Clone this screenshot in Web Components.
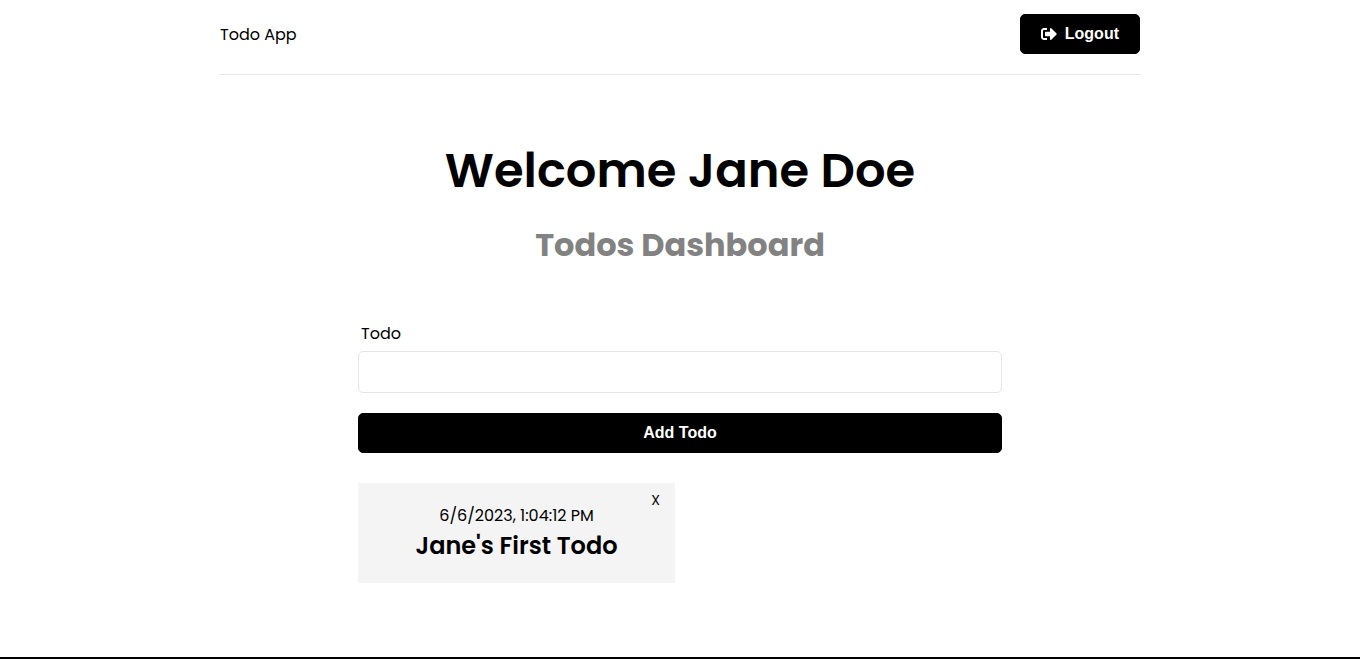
<!DOCTYPE html>
<html lang="en">
<head>
<meta charset="utf-8">
<meta name="viewport" content="width=device-width, initial-scale=1">
<title>Todo App</title>
<style>
  body { margin: 0; background: #fff; color: #000; font: 16px/25px Poppins, Inter, sans-serif; }
</style>
</head>
<body>
<todo-app>
  <app-header slot="header">Todo App</app-header>
  <page-heading>Welcome Jane Doe<span slot="subtitle">Todos Dashboard</span></page-heading>
  <todo-form></todo-form>
  <todo-list>
    <todo-item date="6/6/2023, 1:04:12 PM">Jane's First Todo</todo-item>
  </todo-list>
</todo-app>

<script>
  const base = `<style>
    *, *::before { box-sizing: border-box; }
    h1, h2, p { margin: 0; }
    button { font: 700 16px/18px Arial, "Liberation Sans", sans-serif; cursor: pointer; }
    .btn {
      display: flex; align-items: center; justify-content: center; gap: 8px;
      height: 40px; padding: 0 20px; border: 1px solid #000; border-radius: 5px;
      background: #000; color: #fff;
    }
  </style>`;

  function define(name, markup, ready) {
    const template = document.createElement('template');
    template.innerHTML = base + markup;
    customElements.define(name, class extends HTMLElement {
      constructor() {
        super();
        this.attachShadow({ mode: 'open' }).append(template.content.cloneNode(true));
      }
      connectedCallback() { if (ready) ready(this, this.shadowRoot); }
    });
  }

  define('todo-app', `
    <style>
      :host { display: block; box-sizing: border-box; min-height: 100vh; border-bottom: 2px solid #000; }
      .container { max-width: 960px; margin: 0 auto; padding: 0 20px 60px; box-sizing: border-box; }
    </style>
    <div class="container">
      <slot name="header"></slot>
      <main><slot></slot></main>
    </div>`);

  define('app-header', `
    <style>
      :host { display: block; }
      header {
        display: flex; align-items: center; justify-content: space-between;
        padding: 14px 0 20px; margin-bottom: 60px; border-bottom: 1px solid #e6e6e6;
      }
      a { color: inherit; text-decoration: none; }
      svg { display: block; }
    </style>
    <header>
      <a href="#"><slot></slot></a>
      <button class="btn" type="button">
        <svg width="16" height="16" viewBox="0 0 512 512" fill="currentColor" aria-hidden="true">
          <path d="M497 273L329 441c-15 15-41 4.500-41-17v-96H152c-13.300 0-24-10.700-24-24v-96c0-13.300 10.700-24 24-24h136V88c0-21.400 25.900-32 41-17l168 168c9.300 9.400 9.300 24.600 0 34zM192 436v-40c0-6.600-5.400-12-12-12H96c-17.700 0-32-14.300-32-32V160c0-17.700 14.300-32 32-32h84c6.600 0 12-5.400 12-12V76c0-6.600-5.400-12-12-12H96c-53 0-96 43-96 96v192c0 53 43 96 96 96h84c6.600 0 12-5.400 12-12z"/>
        </svg>
        Logout
      </button>
    </header>`);

  define('page-heading', `
    <style>
      :host { display: block; margin-bottom: 50px; text-align: center; }
      h1 { font-size: 48px; line-height: 72px; font-weight: 600; }
      h2 { margin-top: 12px; font-size: 32px; line-height: 52px; font-weight: 700; color: #828282; }
    </style>
    <h1><slot></slot></h1>
    <h2><slot name="subtitle"></slot></h2>`);

  define('todo-form', `
    <style>
      :host { display: block; width: 70%; margin: 0 auto 30px; }
      label { display: block; padding: 0 3px; margin-bottom: 5px; }
      input {
        display: block; width: 100%; height: 42px; padding: 10px; margin-bottom: 20px;
        border: 1px solid #e6e6e6; border-radius: 5px; font: inherit;
      }
      .btn { width: 100%; }
    </style>
    <form>
      <label for="text">Todo</label>
      <input type="text" id="text" name="text">
      <button class="btn" type="submit">Add Todo</button>
    </form>`, (host, root) => {
      root.querySelector('form').addEventListener('submit', e => e.preventDefault());
    });

  define('todo-list', `
    <style>
      :host { display: grid; grid-template-columns: repeat(2, 1fr); gap: 10px; width: 70%; margin: 0 auto; }
    </style>
    <slot></slot>`);

  define('todo-item', `
    <style>
      :host { display: block; position: relative; box-sizing: border-box; padding: 20px 0 19px; background: #f4f4f4; text-align: center; }
      h2 { font-size: 24px; line-height: 36px; font-weight: 600; }
      .close {
        position: absolute; top: 5px; right: 15px; padding: 0; border: 0;
        background: none; color: inherit; font: 14px/24px Poppins, Inter, sans-serif;
      }
    </style>
    <p></p>
    <h2><slot></slot></h2>
    <button class="close" type="button" aria-label="Delete todo">X</button>`, (host, root) => {
      root.querySelector('p').textContent = host.getAttribute('date');
      root.querySelector('.close').addEventListener('click', () => host.remove());
    });
</script>
</body>
</html>
